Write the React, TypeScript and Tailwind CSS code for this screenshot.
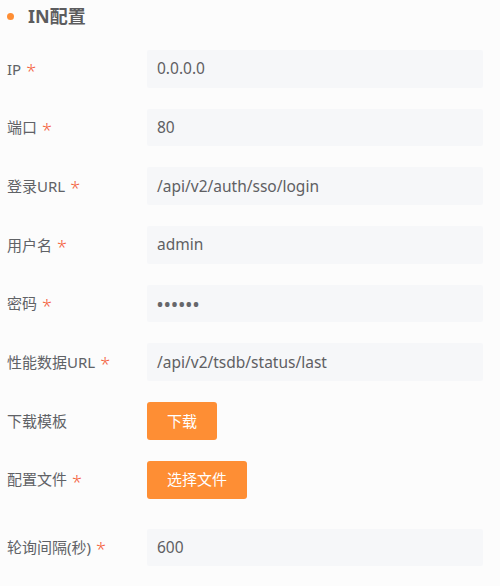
import React from 'react';

const FONT = "font-['Noto_Sans','Noto_Sans_CJK_SC',sans-serif]";

type Field = { label: string; value: string; required?: boolean; password?: boolean };

const fields: Field[] = [
  { label: 'IP', value: '0.0.0.0', required: true },
  { label: '端口', value: '80', required: true },
  { label: '登录URL', value: '/api/v2/auth/sso/login', required: true },
  { label: '用户名', value: 'admin', required: true },
  { label: '密码', value: '••••••', required: true, password: true },
  { label: '性能数据URL', value: '/api/v2/tsdb/status/last', required: true },
];

function Label({ text, required }: { text: string; required?: boolean }) {
  return (
    <div className="w-[140px] shrink-0 flex items-center text-[15px] text-[#606266]">
      <span>{text}</span>
      {required && (
        <span className="ml-[5px] text-[18px] font-light leading-none text-[#f4623f] translate-y-[2px]">*</span>
      )}
    </div>
  );
}

function Row({ children, className = '' }: { children: React.ReactNode; className?: string }) {
  return <div className={`flex items-center h-[37.7px] ${className}`}>{children}</div>;
}

function Input({ value, password }: { value: string; password?: boolean }) {
  return (
    <div className="w-[336px] h-full rounded-[2px] bg-[#f6f7f9] flex items-center pl-[10px] text-[15.5px] text-[#5f6063]">
      <span className={password ? 'tracking-[1.2px] text-[16px] font-bold text-[#66676b]' : ''}>{value}</span>
    </div>
  );
}

function OrangeButton({ text }: { text: string }) {
  return (
    <button className="h-[38px] px-[20px] rounded-[3px] bg-[#fe8e34] text-white text-[15px]">{text}</button>
  );
}

export default function App() {
  return (
    <div className={`${FONT} w-[500px] h-[586px] bg-[#fcfcfc] pl-[7px] pt-[5px]`}>
      <div className="flex items-center h-[22px]">
        <span className="w-[7px] h-[7px] rounded-full bg-[#fe8e34]" />
        <span className="ml-[14px] text-[18px] font-bold text-[#5c5c5e]">IN配置</span>
      </div>

      <div className="mt-[23px] flex flex-col gap-[21px]">
        {fields.map((f) => (
          <Row key={f.label}>
            <Label text={f.label} required={f.required} />
            <Input value={f.value} password={f.password} />
          </Row>
        ))}
        <Row>
          <Label text="下载模板" />
          <OrangeButton text="下载" />
        </Row>
        <Row>
          <Label text="配置文件" required />
          <OrangeButton text="选择文件" />
        </Row>
        <Row className="mt-[9px]">
          <Label text="轮询间隔(秒)" required />
          <Input value="600" />
        </Row>
      </div>
    </div>
  );
}
